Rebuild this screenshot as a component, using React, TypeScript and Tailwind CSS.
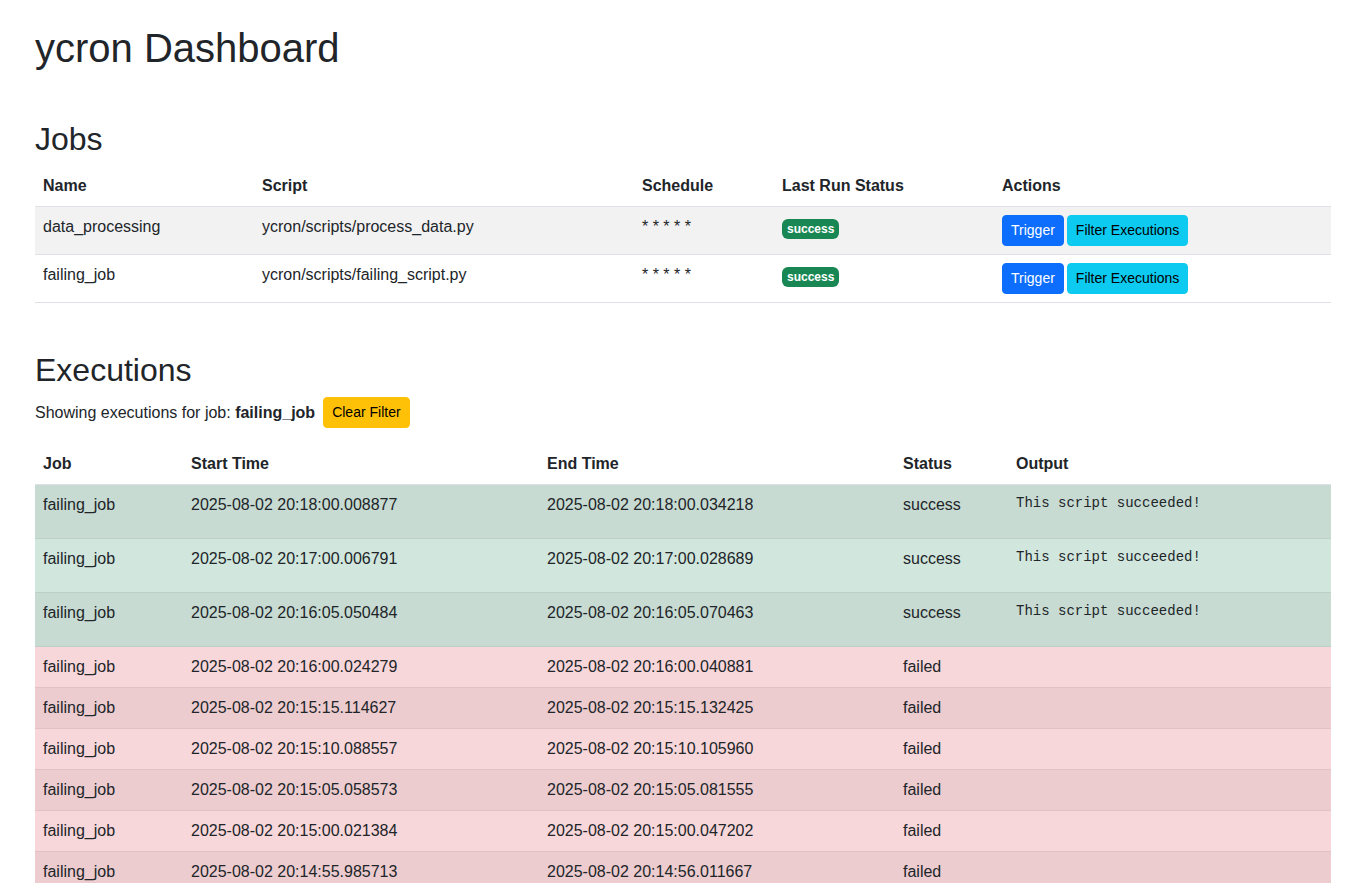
const jobs = [
  { name: 'data_processing', script: 'ycron/scripts/process_data.py', schedule: '* * * * *', status: 'success' },
  { name: 'failing_job', script: 'ycron/scripts/failing_script.py', schedule: '* * * * *', status: 'success' },
];

const executions = [
  { start: '2025-08-02 20:18:00.008877', end: '2025-08-02 20:18:00.034218', status: 'success', output: 'This script succeeded!' },
  { start: '2025-08-02 20:17:00.006791', end: '2025-08-02 20:17:00.028689', status: 'success', output: 'This script succeeded!' },
  { start: '2025-08-02 20:16:05.050484', end: '2025-08-02 20:16:05.070463', status: 'success', output: 'This script succeeded!' },
  { start: '2025-08-02 20:16:00.024279', end: '2025-08-02 20:16:00.040881', status: 'failed', output: '' },
  { start: '2025-08-02 20:15:15.114627', end: '2025-08-02 20:15:15.132425', status: 'failed', output: '' },
  { start: '2025-08-02 20:15:10.088557', end: '2025-08-02 20:15:10.105960', status: 'failed', output: '' },
  { start: '2025-08-02 20:15:05.058573', end: '2025-08-02 20:15:05.081555', status: 'failed', output: '' },
  { start: '2025-08-02 20:15:00.021384', end: '2025-08-02 20:15:00.047202', status: 'failed', output: '' },
  { start: '2025-08-02 20:14:55.985713', end: '2025-08-02 20:14:56.011667', status: 'failed', output: '' },
];

function rowClass(status: string, odd: boolean) {
  if (status === 'success') {
    return odd ? 'bg-[#c7dbd2] border-[#bcd0c7]' : 'bg-[#d1e7dd] border-[#bcd0c7]';
  }
  return odd ? 'bg-[#eccccf] border-[#dfc2c4]' : 'bg-[#f8d7da] border-[#dfc2c4]';
}

export default function App() {
  return (
    <div className="min-h-screen bg-white text-[#212529] font-['Liberation_Sans',Arial,sans-serif] text-base leading-6">
      <div className="ml-[35px] w-[1296px] pt-6">
        <h1 className="text-[40px] leading-[48px] font-medium mb-2">ycron Dashboard</h1>

        <h2 className="mt-[48px] text-[32px] leading-[38px] font-medium mb-2">Jobs</h2>
        <table className="w-full table-fixed border-collapse mb-4">
          <colgroup>
            <col className="w-[219px]" />
            <col className="w-[380px]" />
            <col className="w-[140px]" />
            <col className="w-[220px]" />
            <col />
          </colgroup>
          <thead>
            <tr className="border-b border-[#dee2e6]">
              <th className="text-left font-bold px-2 py-2">Name</th>
              <th className="text-left font-bold px-2 py-2">Script</th>
              <th className="text-left font-bold px-2 py-2">Schedule</th>
              <th className="text-left font-bold px-2 py-2">Last Run Status</th>
              <th className="text-left font-bold px-2 py-2">Actions</th>
            </tr>
          </thead>
          <tbody>
            {jobs.map((job, i) => (
              <tr key={job.name} className={`border-b border-[#dee2e6] ${i % 2 === 0 ? 'bg-[#f2f2f2]' : 'bg-white'}`}>
                <td className="px-2 py-2 align-top">{job.name}</td>
                <td className="px-2 py-2 align-top">{job.script}</td>
                <td className="px-2 py-2 align-top">{job.schedule}</td>
                <td className="px-2 py-2 align-top">
                  <span className="inline-block mt-[4px] rounded-[6px] bg-[#198754] text-white text-[12px] leading-3 font-bold px-[5px] py-[4px]">
                    {job.status}
                  </span>
                </td>
                <td className="px-2 py-2 align-top">
                  <div className="flex gap-[3px]">
                    <button className="rounded-[4px] border border-[#0d6efd] bg-[#0d6efd] text-white text-[14px] leading-[21px] px-2 py-1">
                      Trigger
                    </button>
                    <button className="rounded-[4px] border border-[#0dcaf0] bg-[#0dcaf0] text-black text-[14px] leading-[21px] px-2 py-1">
                      Filter Executions
                    </button>
                  </div>
                </td>
              </tr>
            ))}
          </tbody>
        </table>

        <h2 className="mt-[48px] text-[32px] leading-[38px] font-medium mb-2">Executions</h2>
        <div className="flex items-center mb-4">
          <span>Showing executions for job:&nbsp;</span>
          <strong className="font-bold">failing_job</strong>
          <button className="ml-[8px] rounded-[4px] border border-[#ffc107] bg-[#ffc107] text-black text-[14px] leading-[21px] px-2 py-1">
            Clear Filter
          </button>
        </div>
        <table className="w-full table-fixed border-collapse">
          <colgroup>
            <col className="w-[148px]" />
            <col className="w-[356px]" />
            <col className="w-[356px]" />
            <col className="w-[113px]" />
            <col />
          </colgroup>
          <thead>
            <tr className="border-b border-[#dee2e6]">
              <th className="text-left font-bold px-2 py-2">Job</th>
              <th className="text-left font-bold px-2 py-2">Start Time</th>
              <th className="text-left font-bold px-2 py-2">End Time</th>
              <th className="text-left font-bold px-2 py-2">Status</th>
              <th className="text-left font-bold px-2 py-2">Output</th>
            </tr>
          </thead>
          <tbody>
            {executions.map((ex, i) => (
              <tr key={ex.start} className={`border-b ${rowClass(ex.status, i % 2 === 0)}`}>
                <td className="px-2 py-2 align-top">failing_job</td>
                <td className="px-2 py-2 align-top">{ex.start}</td>
                <td className="px-2 py-2 align-top">{ex.end}</td>
                <td className="px-2 py-2 align-top">{ex.status}</td>
                <td className="px-2 py-2 align-top">
                  {ex.output && (
                    <pre className="font-['Liberation_Mono','Courier_New',monospace] text-[14px] leading-[21px] mb-4">
                      {ex.output}
                    </pre>
                  )}
                </td>
              </tr>
            ))}
          </tbody>
        </table>
      </div>
    </div>
  );
}
